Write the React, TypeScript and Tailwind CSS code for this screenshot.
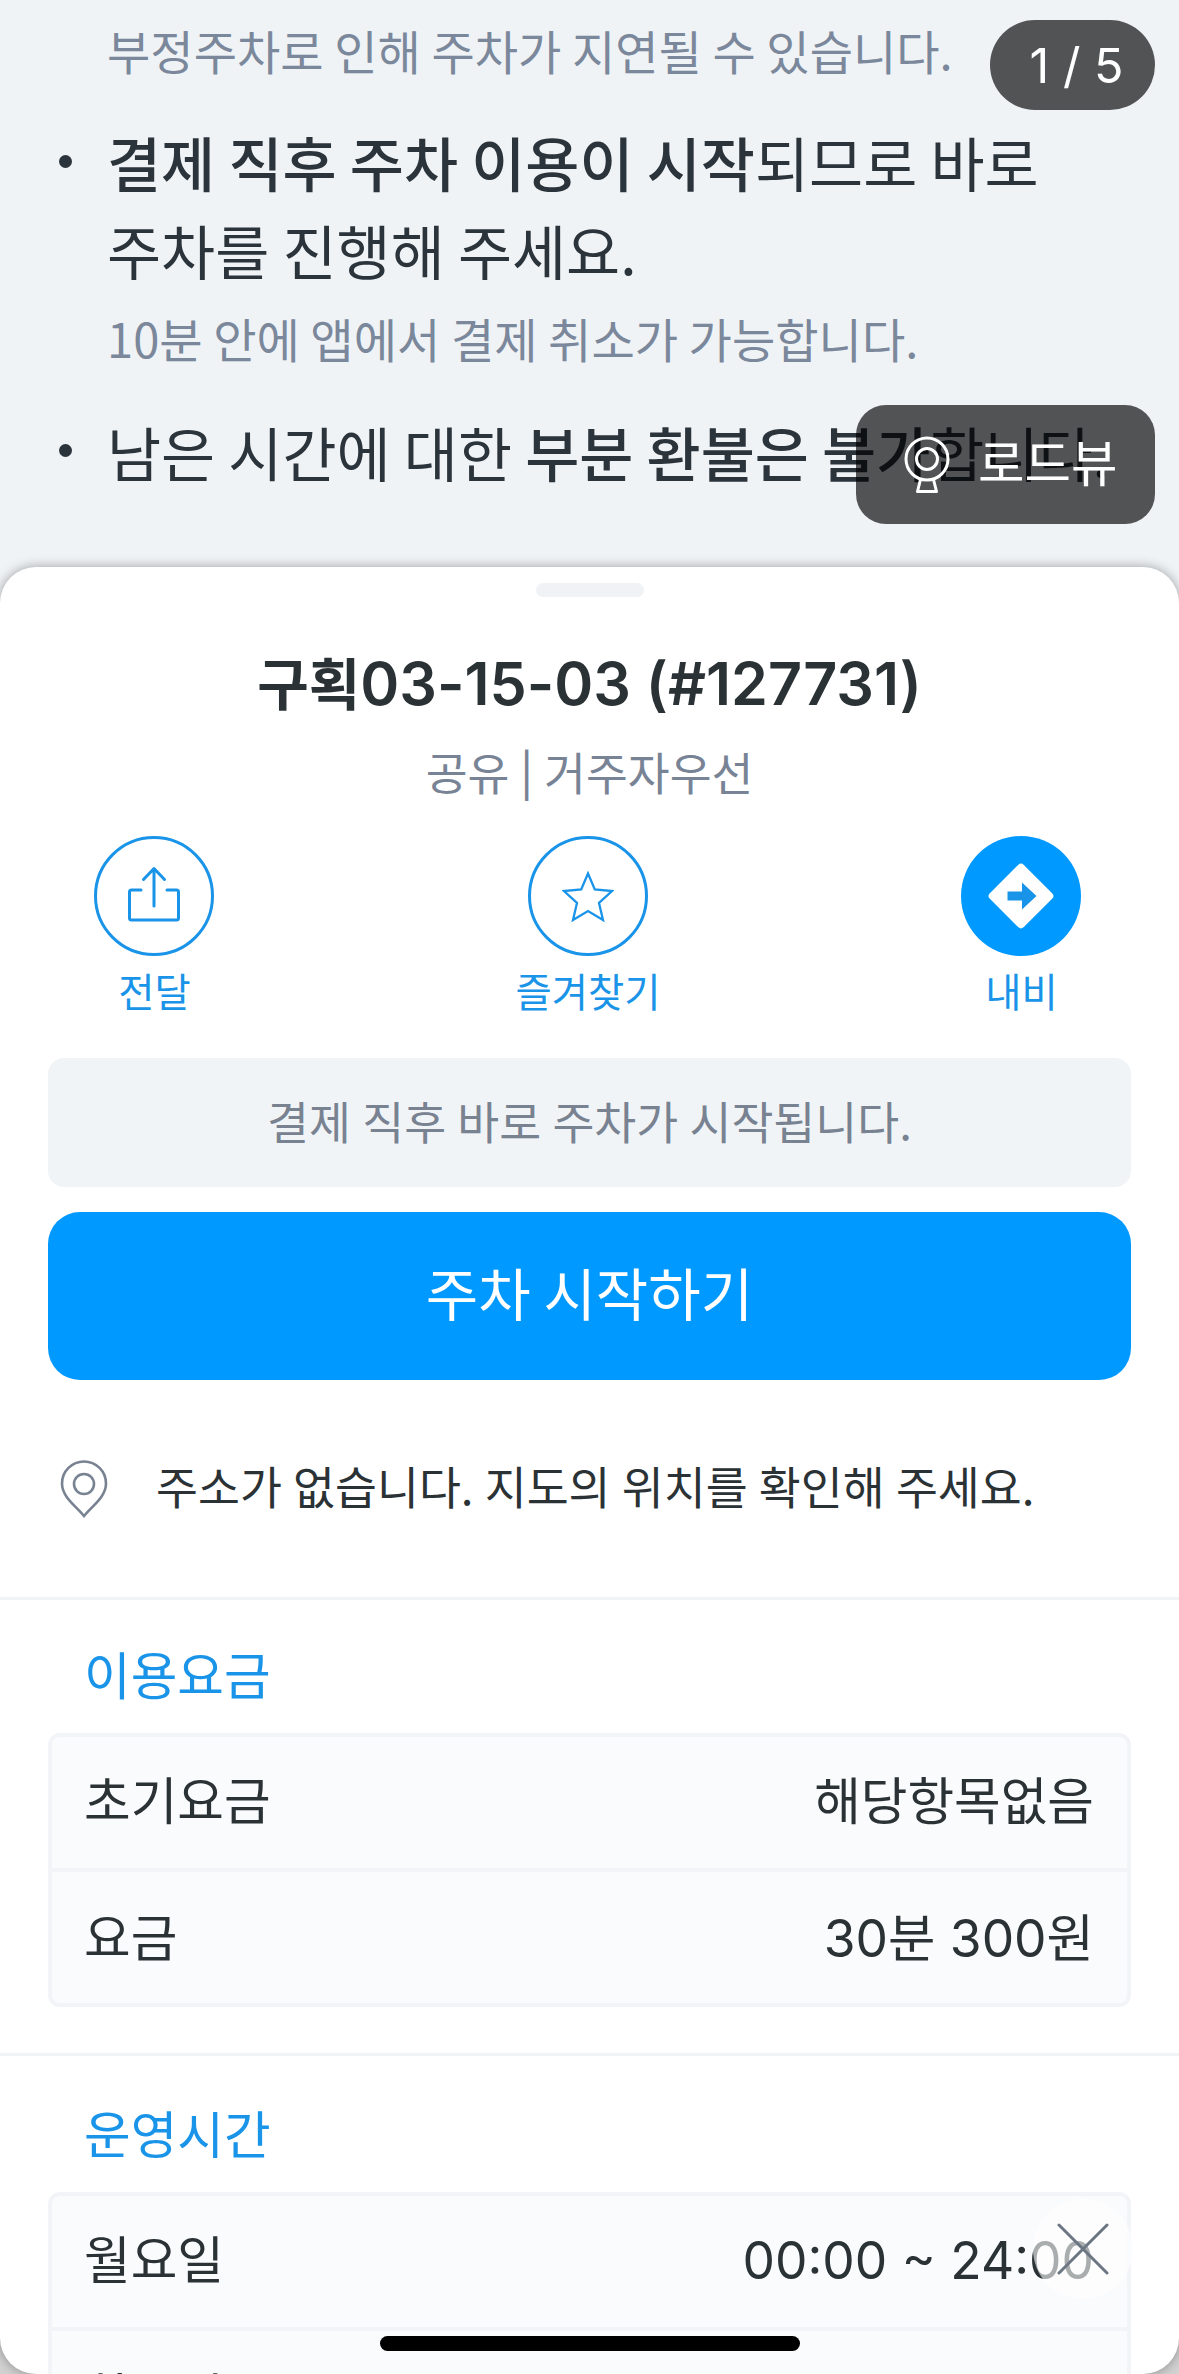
import type { ReactNode } from "react";

type Row = { label: string; value: string };

const feeRows: Row[] = [
  { label: "초기요금", value: "해당항목없음" },
  { label: "요금", value: "30분 300원" },
];

const hourRows: Row[] = [
  { label: "월요일", value: "00:00 ~ 24:00" },
  { label: "화요일", value: "00:00 ~ 24:00" },
];

const ShareIcon = () => (
  <svg width="52" height="64" viewBox="0 0 52 64" fill="none" stroke="currentColor" strokeWidth="3" strokeLinecap="round" strokeLinejoin="round">
    <path d="M13 26H3.5a2 2 0 0 0-2 2v26a2 2 0 0 0 2 2h45a2 2 0 0 0 2-2V28a2 2 0 0 0-2-2H39" />
    <path d="M26 42V5M15.500 15.500 26 4.500 36.500 15.500" />
  </svg>
);

const StarIcon = () => (
  <svg width="52" height="52" viewBox="0 0 52 52" fill="none" stroke="currentColor" strokeWidth="2.300">
    <path d="M26 3.500 32.800 19.500 50 21 37 33 41 50 26 41 11 50 15 33 2 21 19.200 19.500Z" />
  </svg>
);

const NaviIcon = () => (
  <svg width="68" height="68" viewBox="0 0 68 68">
    <rect x="10" y="10" width="48" height="48" rx="4" fill="#fff" transform="rotate(45 34 34)" />
    <path d="M20.500 29.500H35V20.500L49.500 34 35 47.500V38.500H20.500Z" fill="#1a94e8" />
  </svg>
);

const RoadviewIcon = () => (
  <svg width="46" height="58" viewBox="0 0 46 58" fill="none" stroke="#fff" strokeWidth="3" strokeLinejoin="round">
    <circle cx="23" cy="23" r="21" />
    <circle cx="23" cy="23" r="10.500" />
    <path d="M16.500 43.500 13.500 55.500H32.500L29.500 43.500" />
  </svg>
);

const PinIcon = () => (
  <svg width="48" height="58" viewBox="0 0 48 58" fill="none" stroke="#788291" strokeWidth="2.600">
    <path d="M24 56C16 46 2 37 2 23.500a22 22 0 0 1 44 0C46 37 32 46 24 56Z" />
    <circle cx="24" cy="24" r="10" />
  </svg>
);

const Action = ({ label, filled, children }: { label: string; filled?: boolean; children: ReactNode }) => (
  <button className="flex w-[160px] flex-col items-center text-[#1a94e8]">
    <span
      className={
        filled
          ? "flex size-[120px] items-center justify-center rounded-full bg-[#0099ff]"
          : "flex size-[120px] items-center justify-center rounded-full border-3 border-[#1a94e8]"
      }
    >
      {children}
    </span>
    <span className="mt-[12px] pl-[1px] text-[39.400px] leading-[44px] whitespace-nowrap">{label}</span>
  </button>
);

const Section = ({ title, rows }: { title: string; rows: Row[] }) => (
  <section className="border-t-3 border-[#f2f3f5] px-12 pb-[46px] last-of-type:pt-[3px]">
    <h2 className="flex h-[133px] items-center px-[36px] pt-[13px] text-[50.700px] text-[#1a94e8]">{title}</h2>
    <div className="overflow-hidden rounded-xl border-4 border-[#f3f4f7] bg-[#fafbfd]">
      {rows.map((row, i) => (
        <div
          key={row.label}
          className={`flex items-center pr-[33px] pl-8 text-[50.700px] text-[#2b3235] ${i > 0 ? "h-[135px] border-t-4 border-[#f3f4f7]" : "h-[131px] pb-[4px]"}`}
        >
          <div className="flex w-full items-baseline justify-between">
            <span>{row.label}</span>
            <span className="font-['Inter','Noto_Sans_CJK_KR',sans-serif]">
              {/\d/.test(row.value) ? <span className="text-[51.500px]">{row.value}</span> : row.value}
            </span>
          </div>
        </div>
      ))}
    </div>
  </section>
);

const Notice = () => (
  <div className="relative h-[567px] overflow-hidden text-[58.800px] leading-[88px] text-[#2b333b]">
    <div className="flex flex-col pl-[107px] whitespace-nowrap">
      <p className="mt-[15px] text-[47.100px] leading-[70px] text-[#7b879a]">부정주차로 인해 주차가 지연될 수 있습니다.</p>
      <div className="relative mt-[33px]">
        <span className="absolute top-[37px] -left-[48px] size-[13px] rounded-full bg-[#2b333b]" />
        <p><b className="font-medium">결제 직후 주차 이용이 시작</b>되므로 바로</p>
        <p>주차를 진행해 주세요.</p>
      </div>
      <p className="mt-[9px] text-[47.100px] leading-[70px] text-[#7b879a]">10분 안에 앱에서 결제 취소가 가능합니다.</p>
      <div className="relative mt-[35px]">
        <span className="absolute top-[36px] -left-[48px] size-[13px] rounded-full bg-[#2b333b]" />
        <p>남은 시간에 대한 <b className="font-medium">부분 환불은 불가</b>합니다.</p>
      </div>
    </div>
    <div className="absolute top-5 right-6 flex h-[90px] w-[165px] items-center justify-center rounded-full bg-black/66 pt-[1px] pl-2 font-['Inter'] text-[48.500px] text-white">
      1 / 5
    </div>
    <button className="absolute top-[405px] right-6 flex h-[119px] w-[299px] items-center rounded-[30px] bg-black/66 pl-12 text-[50.500px] text-white">
      <RoadviewIcon />
      <span className="ml-[28px] pb-[9px]">로드뷰</span>
    </button>
  </div>
);

const App = () => {
  return (
    <div className="relative h-[2374px] w-[1179px] overflow-hidden bg-[linear-gradient(#eff3f6_50%,#d2d2d2_50%)] font-['Noto_Sans_CJK_KR',sans-serif]">
      <Notice />

      <main className="relative h-[1807px] overflow-hidden rounded-[36px] bg-white shadow-[0_0_12px_rgba(0,0,0,0.35)]">
        <div className="mx-auto mt-4 h-[14px] w-[108px] rounded-full bg-[#f0f2f5]" />

        <h1 className="mt-[43px] text-center font-['Inter','Noto_Sans_CJK_KR',sans-serif] text-[59.200px] leading-[88px] font-semibold text-[#2b3235]">
          <span className="text-[56px]">구획</span>03-15-03 (#127731)
        </h1>
        <p className="mt-[12px] text-center text-[45.500px] leading-[60px] text-[#788496]">
          공유 <span className="font-['Inter'] text-[43px]">|</span> 거주자우선
        </p>

        <div className="mt-[31px] flex justify-between pr-[78px] pl-[74px]">
          <Action label="전달"><ShareIcon /></Action>
          <Action label="즐겨찾기"><StarIcon /></Action>
          <Action label="내비" filled><NaviIcon /></Action>
        </div>

        <div className="mx-12 mt-[46px] flex h-[129px] items-center justify-center rounded-2xl bg-[#f0f4f7] pb-1 text-[45.600px] text-[#788291] [word-spacing:1px]">
          결제 직후 바로 주차가 시작됩니다.
        </div>
        <button className="mx-12 mt-[25px] flex h-[168px] w-[1083px] items-center justify-center rounded-[32px] bg-[#0099ff] pb-[8px] text-[57px] text-white">
          주차 시작하기
        </button>

        <div className="flex h-[217px] items-center pl-[60px] text-[45.600px] text-[#2b3235] [word-spacing:1px]">
          <PinIcon />
          <span className="ml-12 pb-[6px]">주소가 없습니다. 지도의 위치를 확인해 주세요.</span>
        </div>

        <Section title="이용요금" rows={feeRows} />
        <Section title="운영시간" rows={hourRows} />
      </main>

      <button className="absolute top-[2199px] left-[1033px] flex size-[100px] items-center justify-center rounded-full bg-white/60">
        <svg width="52" height="52" viewBox="0 0 52 52" fill="none" stroke="#6b7682" strokeWidth="3" strokeLinecap="round">
          <path d="M2 2 50 50M50 2 2 50" />
        </svg>
      </button>
      <div className="absolute top-[2336px] left-[380px] h-[15px] w-[420px] rounded-full bg-black" />
    </div>
  );
};

export default App;
